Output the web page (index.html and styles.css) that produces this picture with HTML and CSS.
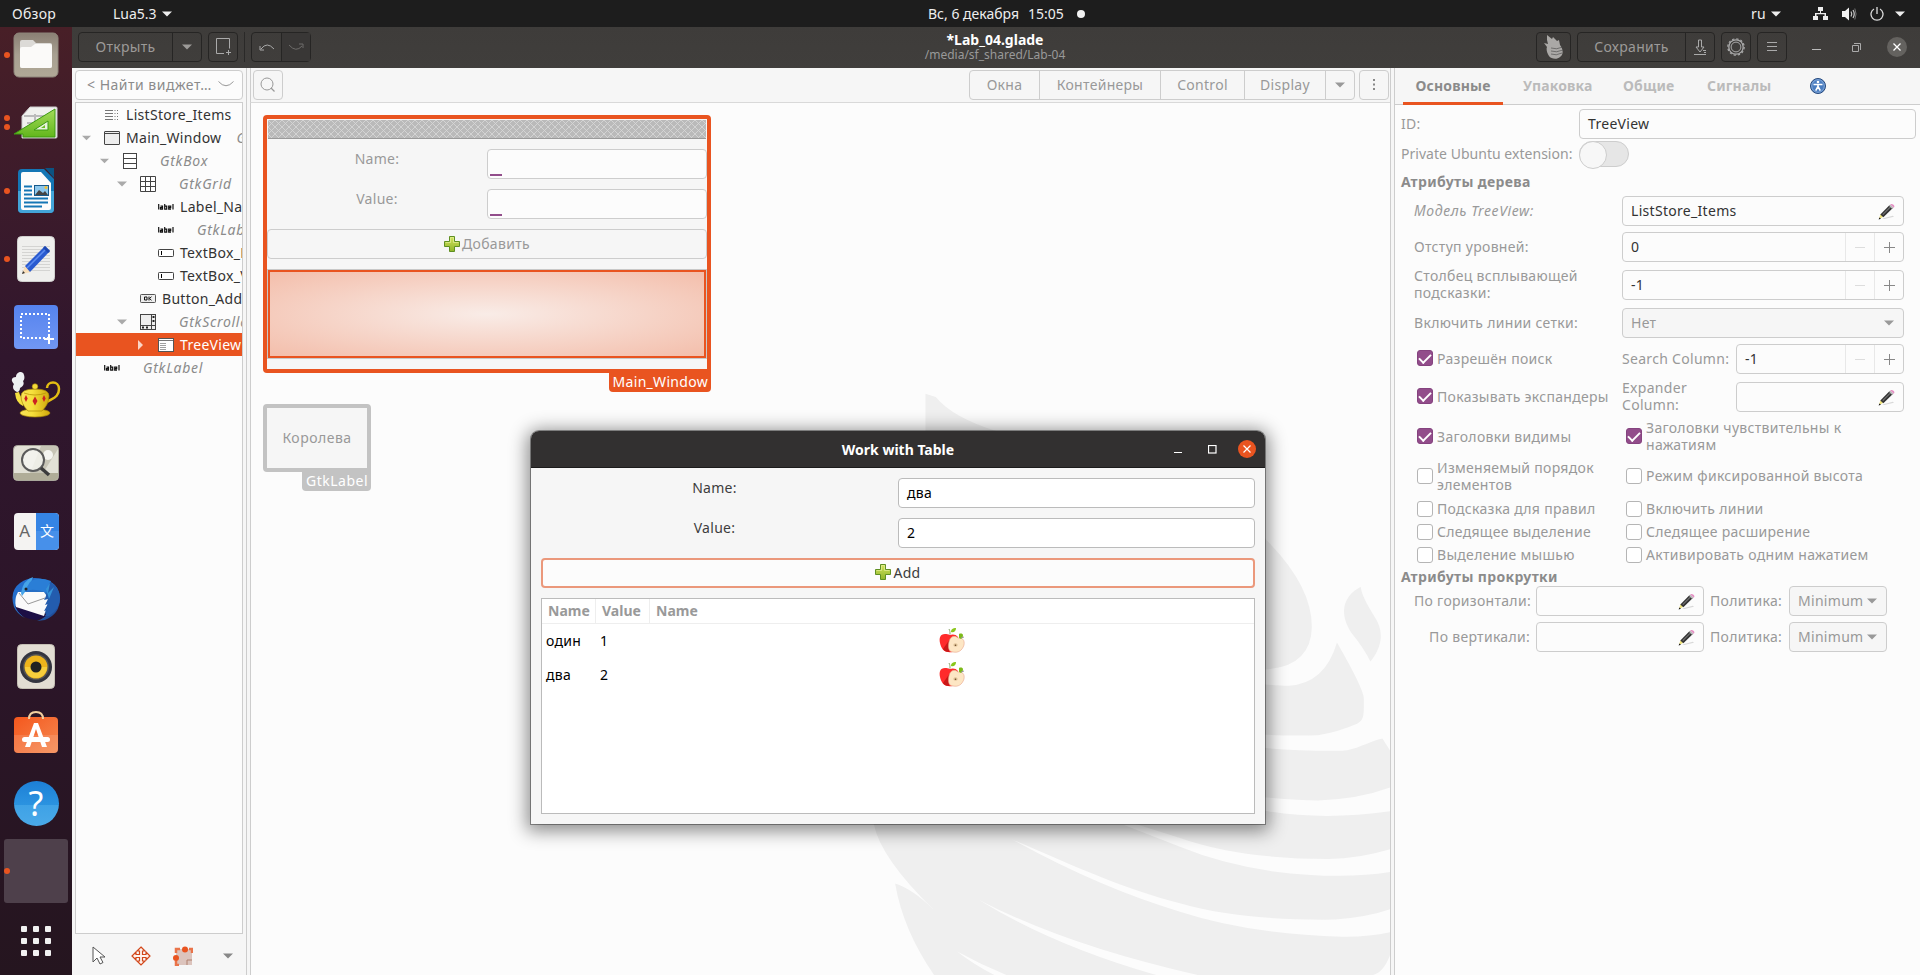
FILE: index.html
```html
<!DOCTYPE html>
<html lang="ru">
<head>
<meta charset="utf-8">
<title>Glade</title>
<link rel="stylesheet" href="styles.css">
</head>
<body>
<svg width="0" height="0" class="defs">
  <defs>
    <linearGradient id="gPlus" x1="0" y1="0" x2="0" y2="1"><stop offset="0" stop-color="#d4e45f"/><stop offset="1" stop-color="#8fb52a"/></linearGradient>
    <linearGradient id="gFolder" x1="0" y1="0" x2="0" y2="1"><stop offset="0" stop-color="#8a7f74"/><stop offset=".5" stop-color="#a8a092"/><stop offset="1" stop-color="#b0a896"/></linearGradient>
    <linearGradient id="gShot" x1="0" y1="0" x2="0" y2="1"><stop offset="0" stop-color="#5583ee"/><stop offset="1" stop-color="#7197f4"/></linearGradient>
    <linearGradient id="gGreen" x1="0" y1="0" x2="0" y2="1"><stop offset="0" stop-color="#a4dc5a"/><stop offset="1" stop-color="#62b61c"/></linearGradient>
    <linearGradient id="gBag" x1="0" y1="0" x2="1" y2="1"><stop offset="0" stop-color="#f4571d"/><stop offset="1" stop-color="#f58a52"/></linearGradient>
    <linearGradient id="gBird" x1="0" y1="0" x2="1" y2="1"><stop offset="0" stop-color="#1f6ed4"/><stop offset=".5" stop-color="#2a6fc0"/><stop offset="1" stop-color="#1b3f8a"/></linearGradient>
    <linearGradient id="gPot" x1="0" y1="0" x2="1" y2="0"><stop offset="0" stop-color="#f7e25a"/><stop offset=".4" stop-color="#f6e03c"/><stop offset="1" stop-color="#d0a80c"/></linearGradient>
    <symbol id="plus" viewBox="0 0 16 16"><path d="M5.500.5h5v5h5v5h-5v5h-5v-5h-5v-5h5z" fill="url(#gPlus)" stroke="#5f8f22"/><path d="M6.500 6.500v-5h3v5M1.500 6.500h5M9.500 6.500h5" fill="none" stroke="#e4ef98" stroke-opacity=".7"/></symbol>
    <symbol id="pencil" viewBox="0 0 16 16"><path d="M4 14.500l10-2.500 1 1-9 2z" fill="#d8d8d8"/><path d="M1 15l1.200-4.500L5 13z" fill="#eee27a"/><path d="M.6 15.600l.8-2 1.400 1.300z" fill="#111"/><path d="M2.200 10.800L11 1.900l3 2.800-9 8.700z" fill="#333"/><path d="M4.500 11L12 3.500" stroke="#777" fill="none"/><path d="M10.300 2.600l1.200-1.200 3.200 3-1.300 1.200z" fill="#bbb"/><path d="M11.600 1.300C13-.2 17 2.200 14.800 4.400z" fill="#e590c4"/></symbol>
    <symbol id="down" viewBox="0 0 10 6"><path d="M0 .5h10L5 5.500z" fill="currentColor"/></symbol>
    <symbol id="apple" viewBox="0 0 26 25">
      <path d="M6 6C1 6 0 10 1 15c1 5 4 9 8 9 4 1 8 0 9-4l1-11c-2-3-6-3-8-2-2-1-3-1-5-1z" fill="#ff2b2b"/>
      <path d="M4 21l7-10 1 9-2 4c-3 0-5-1-6-3z" fill="#c91818"/>
      <path d="M11 6.500C11 4 11 3 10 1" fill="none" stroke="#8aa56a"/><path d="M12 4c0-3 2-4 5-4 0 3-2 5-5 4z" fill="#8ac61a"/>
      <path d="M10 14c1-6 6-7 9-4 4-1 7 2 6 7-2 6-6 8-11 7-5 0-5-6-4-10z" fill="#fde6c4" stroke="#e9a58c" stroke-width=".6"/>
      <path d="M20 10V6c2-1 4 0 4 1 0 2-1 3-2 4z" fill="#7dba1a"/><path d="M22 10l3-1" stroke="#999"/>
      <ellipse cx="16.500" cy="17" rx="2.200" ry="1.800" fill="#e0c49a"/><circle cx="16.500" cy="17.300" r=".8" fill="#6b4a2a"/>
    </symbol>
    <symbol id="lbl" viewBox="0 0 16 8"><g fill="none" stroke="#111" stroke-width="1.200"><path d="M.7 1v5.500M2.500 3.200h2v3h-2v-1.500h2M6.700 1v5.200h2v-3h-2M10.700 4.700h2V3.200h-2v3h2.300M15 1v5.500"/></g></symbol>
    <symbol id="entryIcon" viewBox="0 0 16 8"><rect x=".5" y=".5" width="15" height="7" rx=".8" fill="#fff" stroke="#444"/><path d="M3.500 2v4" stroke="#000"/></symbol>
    <pattern id="mesh" width="7" height="7" patternUnits="userSpaceOnUse"><rect width="7" height="7" fill="#bababa"/><path d="M0 0l7 7M7 0L0 7" stroke="#d6d6d6" stroke-width=".9"/></pattern>
  </defs>
</svg>

<header class="topbar">
  <span class="tb-activities">Обзор</span>
  <span class="tb-app">Lua5.3</span><svg class="tb-arrow" width="10" height="6"><use href="#down"/></svg>
  <span class="tb-date">Вс, 6 декабря</span><span class="tb-time">15:05</span><i class="tb-dot"></i>
  <span class="tb-lang">ru</span><svg class="tb-arrow" width="10" height="6"><use href="#down"/></svg>
  <svg class="tb-net" width="15" height="14"><path d="M5 0h5v4H8v2h5v3h2v4h-5V9h1.500V7.200h-8V9H5v4H0V9h2V6h5V4H5z" fill="#eee"/></svg>
  <svg class="tb-vol" width="15" height="14"><path d="M0 4h3l4-3.500v13L3 10H0z" fill="#f2f2f2"/><path d="M9 4.500q1.500 2.500 0 5M11 3q2.500 4 0 8" fill="none" stroke="#ccc" stroke-width="1.200"/><path d="M12.800 1.500q2.500 5.500 0 11" fill="none" stroke="#777"/></svg>
  <svg class="tb-pow" width="14" height="14"><path d="M4 2a6 6 0 1 0 6 0M7 0v7" fill="none" stroke="#ddd" stroke-width="1.300"/></svg>
  <svg class="tb-arrow tb-last" width="10" height="6"><use href="#down"/></svg>
</header>

<div class="desktop">
<nav class="dock">
  <div class="dock-item"><i class="run"></i>
    <svg width="46" height="46" viewBox="0 0 46 46"><rect x="1" y="1" width="44" height="44" rx="5" fill="url(#gFolder)" stroke="#8d857a"/><path d="M7 10q0-2 2-2h11l3 3h14q2 0 2 2v21q0 2-2 2H9q-2 0-2-2z" fill="#dcdad7"/><path d="M7 17q0-2 2-2h9l4-3h15q2 0 2 2v20q0 2-2 2H9q-2 0-2-2z" fill="#fbfaf9"/></svg></div>
  <div class="dock-item"><i class="run two"></i><i class="run two b"></i>
    <svg width="46" height="34" viewBox="0 0 46 34"><path d="M9 10L17 1h26q1 0 1 1v29q0 1-1 1H9z" fill="#f0f1ee" stroke="#ccc"/><path d="M11 10h20M22 8v10M14 17h12" stroke="#bbb" stroke-width="2"/><path d="M1 28L42 3v28H10v-3z" fill="url(#gGreen)" stroke="#3c9a10"/><path d="M21 24l14-9v9z" fill="#e8f3dd" stroke="#3c9a10"/><path d="M28 22l4-3v3z" fill="#6cc024"/></svg></div>
  <div class="dock-item"><i class="run"></i>
    <svg width="38" height="46" viewBox="0 0 38 46"><path d="M1 5q0-4 4-4h22l10 10v30q0 4-4 4H5q-4 0-4-4z" fill="#1476b5"/><path d="M1 23h36v18q0 4-4 4H5q-4 0-4-4z" fill="#43a4d8"/><path d="M28 0h9v10z" fill="#0c5382"/><path d="M4 6q0-2 2-2h18l10 11v25q0 2-2 2H6q-2 0-2-2z" fill="#fcfcfc"/><path d="M7 18.500h8M7 22.500h8M7 26.500h8M7 30.500h24M7 34.500h24M7 38.500h18" stroke="#1476b5" stroke-width="2"/><rect x="17.500" y="17.500" width="14" height="10" fill="#8cc7ec" stroke="#17598a"/><path d="M18 27l4-5 4 3 2-2 3 4z" fill="#444"/><circle cx="29" cy="19.500" r="1.500" fill="#f5c030"/></svg></div>
  <div class="dock-item"><i class="run"></i>
    <svg width="38" height="46" viewBox="0 0 38 46"><rect x=".5" y=".5" width="37" height="45" rx="4" fill="#efefed" stroke="#d0d0ce"/><path d="M5 10.500h28M5 13.500h28M5 16.500h28M5 19.500h28M5 22.500h28M5 25.500h28M5 28.500h28M5 31.500h28M5 34.500h28" stroke="#d4d4d2"/><path d="M5 38l3-8 6 6z" fill="#f8ddb8"/><path d="M5 38l1-3 2 2z" fill="#333"/><path d="M8 30l20-20 5 5-20 21z" fill="#2a5bd0"/><path d="M10 32l20-20" stroke="#5d8cf0" stroke-width="1.500"/><path d="M26 12l2-2 5 5-2 2z" fill="#1d47b0"/></svg></div>
  <div class="dock-item">
    <svg width="46" height="46" viewBox="0 0 46 46"><rect x="1" y="1" width="44" height="44" rx="4" fill="url(#gShot)"/><rect x="8" y="10" width="28" height="24" fill="none" stroke="#fff" stroke-width="2" stroke-dasharray="2 2"/><path d="M36 30v10M31 35h10" stroke="#fff" stroke-width="2"/></svg></div>
  <div class="dock-item">
    <svg width="50" height="48" viewBox="0 0 50 48"><path d="M6 21c-4-2-5-5-3-8C-1 9 1 6 5 6 5 1 12-1 13 4c1 3 0 5-1 6 2 4-1 6-3 7 0 2-1 4-3 4z" fill="#eef0f2"/><path d="M36 17c0-7 12-8 12 1 0 8-6 9-12 13" fill="none" stroke="#e3bd12" stroke-width="2.500"/><path d="M4 22l4-1q1 5 4 6l0 8Q5 32 4 22z" fill="#f5e040"/><ellipse cx="24" cy="42" rx="15" ry="4" fill="url(#gPot)" stroke="#a98806" stroke-width=".7"/><path d="M10 25q0-7 14-7t14 7q0 8-7 15H17q-7-7-7-15z" fill="url(#gPot)" stroke="#a98806" stroke-width=".7"/><path d="M13 22q11 4 22 0" fill="none" stroke="#b99408" stroke-width=".8"/><circle cx="24" cy="15.500" r="2.800" fill="#f3d93a" stroke="#a98806" stroke-width=".6"/><path d="M15 24l1.700 3.500L15 31l-1.700-3.500zM24 25.500l2.500 4.500-2.500 4.500-2.500-4.500zM33 24l1.700 3.500L33 31l-1.700-3.500z" fill="#cc2222"/></svg></div>
  <div class="dock-item">
    <svg width="46" height="36" viewBox="0 0 46 36"><rect x=".5" y=".5" width="45" height="35" rx="4" fill="#e2e1d6" stroke="#a9a79b"/><path d="M28 1h14q3 0 3 3L30 28H17z" fill="#c7c5b6"/><path d="M1 28h44v4q0 3-3 3H4q-3 0-3-3z" fill="#b0ad98"/><circle cx="35" cy="10" r="5" fill="#f4f4f0"/><circle cx="20" cy="15" r="11" fill="#f6f6f3" fill-opacity=".8" stroke="#5b5b5b" stroke-width="2"/><path d="M28 23l8 7" stroke="#3c3c3c" stroke-width="3.500"/></svg></div>
  <div class="dock-item"><div class="translate"><span>A</span><span>文</span></div></div>
  <div class="dock-item">
    <svg width="48" height="44" viewBox="0 0 48 44"><path d="M2 30Q-3 14 8 6 18-1 30 2q17 3 18 19 0 16-15 22l-8 1q8-3 10-7L4 30q3 7 9 11Q5 37 2 30z" fill="url(#gBird)"/><path d="M3 29l32 9-3 2-7 3Q8 42 3 29z" fill="#1c0f45"/><path d="M6 15l26 0 5 7-5 17L4 30Q2 22 6 15z" fill="#fafafa"/><path d="M7 16l9 11 17-6" fill="none" stroke="#999"/><path d="M9 16Q11 3 21 0q-3 9-11 19z" fill="#46a4e8"/><path d="M12 15q8-5 23 1l4-12Q26-1 18 5z" fill="#2a7ed6"/><path d="M35 15q-1 5-3 8l4-1-3 6 3-1-4 7 4-1-3 6h4q11-7 11-18Q47 9 38 5z" fill="#235cae"/><path d="M34 12l4-6-2 10 6-6-5 12" fill="#3593d8"/><circle cx="14" cy="12" r="1.500" fill="#222"/></svg></div>
  <div class="dock-item">
    <svg width="38" height="46" viewBox="0 0 38 46"><rect x=".5" y=".5" width="37" height="44" rx="4" fill="#e2ddd3" stroke="#c4bfb4"/><circle cx="19" cy="23" r="16" fill="#33343f"/><circle cx="19" cy="23" r="13" fill="#555"/><circle cx="19" cy="23" r="11.500" fill="#eeb41c"/><path d="M8 23a11 11 0 0 0 22 0z" fill="#f7ce3c"/><circle cx="19" cy="23" r="5.500" fill="#222"/></svg></div>
  <div class="dock-item bag">
    <svg width="46" height="44" viewBox="0 0 46 44"><rect x="1" y="7" width="44" height="36" rx="4" fill="url(#gBag)"/><path d="M1 25h44v14q0 4-4 4H5q-4 0-4-4z" fill="#fff" fill-opacity=".12"/><path d="M16 9q0-7 7-7t7 7" fill="none" stroke="#f2cf9f" stroke-width="2"/><path d="M21 13h4l9 24h-5L23 19l-6 18h-5z" fill="#fff"/><rect x="9" y="27" width="28" height="5" rx="2.500" fill="#fff"/></svg></div>
  <div class="dock-item"><div class="help">?</div></div>
  <div class="dock-item blank"><i class="run"></i></div>
  <div class="dock-item apps">
    <svg width="30" height="30" fill="#f1f1f1"><g id="r3"><rect width="6" height="6" rx="1"/><rect x="12" width="6" height="6" rx="1"/><rect x="24" width="6" height="6" rx="1"/></g><use href="#r3" y="12"/><use href="#r3" y="24"/></svg></div>
</nav>

<main class="app">
  <div class="hbar">
    <div class="hgroup"><span class="hb open">Открыть</span><span class="hb hdrop"><svg width="10" height="6"><use href="#down"/></svg></span></div>
    <span class="hb solo newf"><svg width="18" height="18"><path d="M10 15.500H2.500v-15h13v10M14.500 12v5M12 14.500h5" fill="none" stroke="#aaa"/></svg></span>
    <i class="hsep"></i>
    <div class="hgroup undo"><span class="hb"><svg width="16" height="8"><path d="M2 6Q8-2 15 6M1 3v4h4" fill="none" stroke="#aaa"/></svg></span><span class="hb off"><svg width="16" height="8"><path d="M1 2Q8 10 14 3M11 1h4v4" fill="none" stroke="#6e6c6a"/></svg></span></div>
    <div class="htitle"><b>*Lab_04.glade</b><small>/media/sf_shared/Lab-04</small></div>
    <span class="hb solo glade"><svg width="20" height="24"><path d="M3 0l5 4 1-2 4 4 2-1 1 5c4 5 3 10 0 12-3 3-9 2-11-1C3 18 2 14 3 12L0 8l4 1-1-4z" fill="#aaa8a6"/><path d="M7 13q5 2 12-1M7 16q5 2 12-1M7 19q5 2 11-1" fill="none" stroke="#444" stroke-width=".6"/></svg></span>
    <div class="hgroup save"><span class="hb sv">Сохранить</span><span class="hb"><svg width="13" height="16"><path d="M4.500 1h3v7h2.500l-4 5-4-5h2.500zM0 15.500h12M9 11.500h3M10 13.500h2" fill="none" stroke="#aaa"/></svg></span></div>
    <span class="hb solo gear"><svg width="18" height="18"><circle cx="9" cy="9" r="7.200" fill="none" stroke="#aaa" stroke-width="1.300"/><circle cx="9" cy="9" r="8.200" fill="none" stroke="#aaa" stroke-width="1.200" stroke-dasharray="2.300 2"/><circle cx="9" cy="9" r="4.900" fill="none" stroke="#aaa"/></svg></span>
    <span class="hb solo menu"><svg width="10" height="10"><path d="M0 .5h10M0 4.500h10M0 8.500h10" stroke="#aaa"/></svg></span>
    <svg class="wmin" width="9" height="10"><path d="M0 7.500h9" stroke="#bbb"/></svg>
    <svg class="wres" width="9" height="9"><path d="M.5 2.500h6v6h-6zM2 .5h6.500V7" fill="none" stroke="#aaa"/></svg>
    <span class="wclose"><svg width="8" height="8"><path d="M.5.5l7 7M7.500.5l-7 7" stroke="#fff" stroke-width="1.300"/></svg></span>
  </div>

  <div class="body">
  <aside class="left">
    <div class="find"><span>&lt; Найти виджет…</span><svg width="16" height="6"><path d="M.5.5Q8 9 15.500.5" fill="none" stroke="#999"/></svg></div>
    <div class="tree">
      <div class="tr"><svg class="p29" width="13" height="10"><path d="M0 .5h8M0 3.500h8M0 6.500h8M0 9.500h8M9.500 .5h1M12 .5h1M9.500 3.500h1M12 3.500h1M9.500 6.500h1M12 6.500h1M9.500 9.500h1M12 9.500h1" stroke="#777"/></svg><span class="g8">ListStore_Items</span></div>
      <div class="tr"><svg class="ar p6" width="9" height="6"><use href="#down"/></svg><svg class="g13" width="16" height="14"><rect x=".5" y=".5" width="15" height="13" rx=".5" fill="#eee" stroke="#444"/><path d="M1 2.500h14" stroke="#444"/></svg><span class="g6">Main_Window</span><em class="ty g15">GtkWindow</em></div>
      <div class="tr"><svg class="ar p24" width="9" height="6"><use href="#down"/></svg><svg class="g14" width="14" height="16"><rect x=".5" y=".5" width="13" height="15" fill="#fff" stroke="#444"/><path d="M1 5.500h12M1 10.500h12" stroke="#444"/></svg><em class="g23">GtkBox</em></div>
      <div class="tr"><svg class="ar p41" width="10" height="6"><use href="#down"/></svg><svg class="g13" width="16" height="16"><path d="M.5.5h15v15H.5zM5.500 0v16M10.500 0v16M0 5.500h16M0 10.500h16" fill="#fff" stroke="#444"/></svg><em class="g23">GtkGrid</em></div>
      <div class="tr"><svg class="p82" width="16" height="8"><use href="#lbl"/></svg><span class="g6">Label_Name</span></div>
      <div class="tr"><svg class="p82" width="16" height="8"><use href="#lbl"/></svg><em class="g23">GtkLabel</em></div>
      <div class="tr"><svg class="p82" width="16" height="8"><use href="#entryIcon"/></svg><span class="g6">TextBox_Name</span></div>
      <div class="tr"><svg class="p82" width="16" height="8"><use href="#entryIcon"/></svg><span class="g6">TextBox_Value</span></div>
      <div class="tr"><svg class="p64" width="16" height="9"><rect x=".5" y=".5" width="15" height="8" rx=".8" fill="#eee" stroke="#555"/><path d="M4.500 3h2.500v3H4.500zM9 2.500v4M11.500 2.700l-2 1.800 2 1.800" fill="none" stroke="#111"/></svg><span class="g6">Button_Add</span></div>
      <div class="tr"><svg class="ar p41" width="10" height="6"><use href="#down"/></svg><svg class="g13" width="16" height="16"><rect x=".5" y=".5" width="15" height="15" fill="#eee" stroke="#444"/><path d="M0 11.500h16M11.500 0v16" stroke="#444"/><path d="M2 13.500h8M13.500 2v8" stroke="#222" stroke-width="2" stroke-dasharray="2 2"/></svg><em class="g23">GtkScrolledWindow</em></div>
      <div class="tr sel"><svg class="p62" width="5" height="10"><path d="M0 0v10l5-5z" fill="#fbd5c6"/></svg><svg class="g15" width="16" height="14"><rect x=".5" y=".5" width="15" height="13" fill="#fff" stroke="#555"/><path d="M1 2.500h14" stroke="#777"/><path d="M2 5.500h6M2 7.500h6M2 9.500h6M2 11.500h6" stroke="#888" stroke-width=".8"/></svg><span class="g6">TreeView</span></div>
      <div class="tr"><svg class="p28" width="16" height="8"><use href="#lbl"/></svg><em class="g23">GtkLabel</em></div>
    </div>
    <div class="tools">
      <svg class="t1" width="16" height="19"><path d="M1 1v15l4-4 3 6 3-1.500-3-5.500h5z" fill="#fff" stroke="#555"/></svg>
      <svg class="t2" width="20" height="20"><path d="M10 1l4 4h-2.500v3.500H15V6l4 4-4 4v-2.500h-3.500V15H14l-4 4-4-4h2.500v-3.500H5V14l-4-4 4-4v2.500h3.500V5H6z" fill="#fff4ef" stroke="#d2471a" stroke-width="1.200"/></svg>
      <svg class="t3" width="20" height="20"><rect x="3" y="3" width="16" height="16" fill="#dcc4bd"/><path d="M3 7V3h4M19 7V3h-3M3 15v4h3" fill="none" stroke="#e9744a" stroke-width="2.500"/><path d="M14 19v-5h5" fill="none" stroke="#b0806f"/><circle cx="12" cy="3.500" r="3" fill="#e95420"/><circle cx="3" cy="12" r="3" fill="#e95420"/></svg>
      <svg class="t4" width="10" height="6"><use href="#down"/></svg>
    </div>
  </aside>

  <section class="center">
    <div class="cbar">
      <span class="cfind"><svg width="16" height="16"><circle cx="7" cy="7" r="6" fill="none" stroke="#999"/><path d="M11 11l3.500 3.500" stroke="#999" stroke-width="1.300"/></svg></span>
      <div class="cgroup"><span class="w1">Окна</span><span class="w2">Контейнеры</span><span class="w3">Control</span><span class="w4">Display</span><span class="w5"><svg width="10" height="6"><use href="#down"/></svg></span></div>
      <span class="cmore"><svg width="2" height="11"><path d="M1 0v2M1 4.500v2M1 9v2" stroke="#888" stroke-width="2"/></svg></span>
    </div>
    <div class="canvas">
      <svg class="wm" width="540" height="595" viewBox="0 0 1568 1568" preserveAspectRatio="none" fill="#efefef">
        <path d="M190 36L220 45Q270 100 400 136L700 240 1176 418Q1312 540 1312 650 1310 755 1176 763L700 763 190 300z"/>
        <path d="M1454 545C1400 570 1390 620 1430 670Q1462 705 1482 742C1520 700 1520 660 1495 625Q1456 570 1454 545z"/>
        <path d="M1385 692Q1350 800 1245 806 1200 805 1100 795V930Q1230 940 1330 936 1390 927 1445 905C1465 895 1463 880 1463 840Q1463 815 1385 692z"/>
        <path d="M1517 945L1545 985V1072Q1450 1105 1330 1108 1250 1108 1100 1092V960Q1200 978 1400 977C1440 976 1470 955 1517 945z"/>
        <path d="M1545 1136V1235Q1450 1262 1360 1262 1100 1262 929 1207L800 1170 1100 1120Q1300 1168 1545 1136z"/>
        <path d="M40 1170Q60 1260 212 1394L350 1372Q600 1490 980 1568H1490Q1525 1560 1545 1500V1454Q1480 1468 1400 1467 1130 1460 929 1401 700 1340 440 1210C620 1280 760 1340 929 1379Q1100 1425 1380 1422 1480 1415 1545 1393V1296Q1400 1318 1200 1295 1050 1275 929 1230L765 1172z"/>
        <path d="M102 1327Q125 1450 215 1568H390Q330 1540 282 1506 350 1540 425 1568H860Q560 1490 350 1372L350 1330 212 1330V1394Q150 1340 102 1327z"/>
      </svg>
      <div class="win">
        <svg class="mesh" width="438" height="19"><rect width="438" height="19" fill="url(#mesh)"/></svg>
        <div class="wrow"><span>Name:</span><i></i></div>
        <div class="wrow"><span>Value:</span><i></i></div>
        <div class="wbtn"><svg width="16" height="16"><use href="#plus"/></svg>Добавить</div>
        <div class="wtree"></div>
        <span class="tag">Main_Window</span>
      </div>
      <div class="win lab">Королева<span class="tag">GtkLabel</span></div>
    </div>
  </section>

  <aside class="right">
    <div class="tabs"><b class="on">Основные</b><b class="u2">Упаковка</b><b class="u3">Общие</b><b class="u4">Сигналы</b>
      <svg width="16" height="16" viewBox="0 0 16 16"><circle cx="8" cy="8" r="7.500" fill="#4a7dc0" stroke="#26497d"/><circle cx="8" cy="8" r="6.300" fill="none" stroke="#9dbde6" stroke-width=".7"/><circle cx="8" cy="4" r="1.300" fill="#fff"/><path d="M3.500 6.500h9M8 6v3M8 8.500l-2.300 4.200M8 8.500l2.300 4.200" stroke="#fff" stroke-width="1.600" fill="none"/></svg></div>
    <div class="idrow"><span>ID:</span><div class="en">TreeView</div></div>
    <div class="swrow"><span>Private Ubuntu extension:</span><i class="sw"></i></div>
    <b class="sect">Атрибуты дерева</b>
    <div class="prop"><em>Модель TreeView:</em><div class="en">ListStore_Items<svg class="pen" width="17" height="17"><use href="#pencil"/></svg></div></div>
    <div class="prop"><span>Отступ уровней:</span><div class="en spin">0<i class="mi"></i><i class="pl"></i></div></div>
    <div class="prop p38"><span>Столбец всплывающей<br>подсказки:</span><div class="en spin">-1<i class="mi"></i><i class="pl"></i></div></div>
    <div class="prop p38"><span>Включить линии сетки:</span><div class="en combo">Нет<svg width="10" height="6"><use href="#down"/></svg></div></div>
    <div class="half ha"><label><i class="ck on"></i>Разрешён поиск</label><div class="sub"><span>Search Column:</span><div class="en spin">-1<i class="mi"></i><i class="pl"></i></div></div></div>
    <div class="half hb2"><label><i class="ck on"></i>Показывать экспандеры</label><div class="sub"><span>Expander<br>Column:</span><div class="en"><svg class="pen" width="17" height="17"><use href="#pencil"/></svg></div></div></div>
    <div class="half hc"><label><i class="ck on"></i>Заголовки видимы</label><label><i class="ck on"></i><span>Заголовки чувствительны к<br>нажатиям</span></label></div>
    <div class="half hd"><label><i class="ck"></i><span>Изменяемый порядок<br>элементов</span></label><label><i class="ck"></i>Режим фиксированной высота</label></div>
    <div class="half"><label><i class="ck"></i>Подсказка для правил</label><label><i class="ck"></i>Включить линии</label></div>
    <div class="half"><label><i class="ck"></i>Следящее выделение</label><label><i class="ck"></i>Следящее расширение</label></div>
    <div class="half"><label><i class="ck"></i>Выделение мышью</label><label><i class="ck"></i>Активировать одним нажатием</label></div>
    <b class="sect s2">Атрибуты прокрутки</b>
    <div class="adj"><span>По горизонтали:</span><div class="en"><svg class="pen" width="17" height="17"><use href="#pencil"/></svg></div><span class="pol">Политика:</span><div class="en combo">Minimum<svg width="10" height="6"><use href="#down"/></svg></div></div>
    <div class="adj"><span>По вертикали:</span><div class="en"><svg class="pen" width="17" height="17"><use href="#pencil"/></svg></div><span class="pol">Политика:</span><div class="en combo">Minimum<svg width="10" height="6"><use href="#down"/></svg></div></div>
  </aside>
  </div>
</main>
</div>

<div class="dialog">
  <div class="dtitle"><b>Work with Table</b>
    <span class="dctl"><svg width="8" height="9"><path d="M0 7.500h8" stroke="#fff"/></svg><svg width="9" height="9"><rect x=".5" y=".5" width="7.500" height="7.500" fill="none" stroke="#fff" stroke-width="1.200"/></svg><i class="dclose"><svg width="8" height="8"><path d="M.5.5l7 7M7.500.5l-7 7" stroke="#fff" stroke-width="1.200"/></svg></i></span></div>
  <div class="drow"><span>Name:</span><div>два</div></div>
  <div class="drow"><span>Value:</span><div>2</div></div>
  <div class="dadd"><svg width="16" height="16"><use href="#plus"/></svg>Add</div>
  <div class="dtable">
    <div class="dh"><b>Name</b><b>Value</b><b>Name</b></div>
    <div class="dr"><span>один</span><span>1</span><svg width="26" height="25"><use href="#apple"/></svg></div>
    <div class="dr"><span>два</span><span>2</span><svg width="26" height="25"><use href="#apple"/></svg></div>
  </div>
</div>
</body>
</html>
```
FILE: styles.css
```css
* { box-sizing: border-box; }
body { margin: 0; width: 1920px; height: 975px; overflow: hidden; background: #fcfcfc; font: 14px/17px "Noto Sans", "Open Sans", sans-serif; letter-spacing: .3px; color: #999; white-space: nowrap; }
svg { flex: none; display: block; }
em { letter-spacing: .7px; }
.defs { position: absolute; }

/* System bar */
.topbar { height: 27px; background: #1d1d1d; color: #eee; display: flex; align-items: center; }
.tb-activities { width: 113px; padding-left: 12px; }
.tb-app { width: 49px; letter-spacing: 0; }
.tb-date { margin-left: 756px; width: 100px; letter-spacing: 0; }
.tb-time { width: 49px; letter-spacing: 0; }
.tb-dot { width: 8px; height: 8px; border-radius: 50%; background: #f2f2f2; }
.tb-lang { margin-left: 666px; width: 20px; }
.tb-net { margin-left: 32px; }
.tb-vol { margin-left: 14px; }
.tb-pow { margin-left: 13px; }
.tb-last { margin-left: 11px; }

.desktop { display: flex; height: 948px; }

/* Dock */
.dock { width: 72px; flex: none; display: flex; flex-direction: column; gap: 12px; background: linear-gradient(#481f27 0, #3c1b2b 170px, #30162d 330px, #2c1529 600px, #25151f 948px); }
.dock-item { height: 56px; display: flex; align-items: center; justify-content: center; position: relative; flex: none; }
.run { position: absolute; left: 4px; top: 25px; width: 6px; height: 6px; border-radius: 50%; background: #e95420; }
.run.two { top: 20px; }
.run.two.b { top: 29px; }
.bag { padding-bottom: 6px; }
.blank { height: 64px; margin: -4px 4px; border-radius: 3px; background: #4e404b; }
.blank .run { left: 0; top: 29px; }
.apps { height: 60px; }
.translate { width: 45px; height: 37px; border-radius: 4px; overflow: hidden; display: flex; font: 17px/36px "Noto Sans", "Noto Sans CJK SC", sans-serif; color: #666; background: #f4f3f2; text-align: center; }
.translate span { flex: 1; }
.translate span + span { background: linear-gradient(#3584e4 50%, #4790ea 50%); color: #fff; font-size: 14px; }
.help { width: 45px; height: 45px; border-radius: 50%; background: linear-gradient(#1d7fd6 0, #2b93e0 53%, #3fa2e6 54%, #4aa9e8); color: #fff; font-size: 34px; line-height: 45px; text-align: center; }

/* Application header */
.app { width: 1848px; display: flex; flex-direction: column; }
.hbar { height: 41px; flex: none; background: linear-gradient(#3e3c3a, #403e3c); display: flex; align-items: center; padding: 0 0 1px 6px; color: #9c9a98; }
.hgroup { height: 30px; border: 1px solid #262524; border-radius: 4px; display: flex; }
.hb { display: flex; align-items: center; justify-content: center; }
.hgroup .hb + .hb { border-left: 1px solid #262524; }
.hgroup .hb { width: 29px; }
.hgroup .open { width: 93px; padding-bottom: 1px; }
.hgroup .sv { width: 107px; padding-bottom: 1px; }
.solo { height: 30px; width: 30px; border: 1px solid #262524; border-radius: 4px; }
.newf { margin-left: 6px; }
.hsep { width: 1px; height: 30px; background: #2a2928; margin: 0 6px; }
.off { background: #393736; }
.htitle { width: 200px; margin-left: 584px; display: flex; flex-direction: column; align-items: center; line-height: 15px; color: #fff; letter-spacing: 0; }
.htitle small { font-size: 12px; color: #999; line-height: 16px; }
.glade { width: 35px; margin-left: 441px; }
.save { margin-left: 6px; }
.gear, .menu { margin-left: 6px; }
.wmin { margin-left: 25px; }
.wres { margin-left: 31px; }
.wclose { width: 20px; height: 20px; margin-left: 26px; border-radius: 50%; background: #64625f; display: flex; align-items: center; justify-content: center; }

.body { display: flex; height: 907px; }

/* Widget tree */
.left { width: 175px; flex: none; background: #f6f6f6; border-right: 1px solid #cdcdcd; padding: 2px 3px 0; display: flex; flex-direction: column; }
.find { width: 168px; height: 30px; flex: none; border: 1px solid #cdcdcd; border-radius: 4px; background: #fcfcfc; display: flex; align-items: center; justify-content: space-between; padding: 0 8px 2px 11px; color: #8b8b8b; }
.find span { letter-spacing: .5px; }
.tree { width: 168px; height: 832px; flex: none; margin-top: 2px; border: 1px solid #cdcdcd; background: #fcfcfc; overflow: hidden; color: #333; }
.tr { height: 23px; display: flex; align-items: center; }
.tr em { color: #8b8b8b; }
.tr svg { color: #aaa; }
.sel { background: #e95420; color: #fff; }
.p6 { margin-left: 6px; } .p24 { margin-left: 24px; } .p28 { margin-left: 28px; } .p29 { margin-left: 29px; }
.p41 { margin-left: 41px; } .p62 { margin-left: 62px; } .p64 { margin-left: 64px; } .p82 { margin-left: 82px; }
.g6 { margin-left: 6px; } .g8 { margin-left: 8px; } .g13 { margin-left: 13px; } .g14 { margin-left: 14px; } .g15 { margin-left: 15px; } .g23 { margin-left: 23px; }
.tools { height: 41px; padding-top: 2px; display: flex; align-items: center; color: #888; }
.t1 { margin-left: 17px; } .t2 { margin-left: 23px; } .t3 { margin-left: 22px; } .t4 { margin-left: 30px; }

/* Design area */
.center { width: 1144px; flex: none; display: flex; flex-direction: column; border-left: 3px solid #f6f6f6; border-right: 1px solid #cdcdcd; }
.cbar { height: 35px; flex: none; background: #f6f6f6; border-left: 1px solid #cdcdcd; border-bottom: 1px solid #d9d9d9; display: flex; align-items: center; padding-left: 1px; }
.cfind, .cmore, .cgroup { height: 30px; border: 1px solid #cdcdcd; border-radius: 4px; display: flex; align-items: center; justify-content: center; margin-top: -1px; }
.cfind { width: 30px; margin-left: 1px; }
.cmore { width: 30px; margin-left: 4px; }
.cgroup { margin-left: 686px; }
.cgroup span { height: 28px; display: flex; align-items: center; justify-content: center; }
.cgroup span + span { border-left: 1px solid #cdcdcd; }
.w1 { width: 69px; } .w2 { width: 121px; } .w3 { width: 84px; } .w4 { width: 81px; } .w5 { width: 29px; }
.canvas { flex: 1; position: relative; border-left: 1px solid #cdcdcd; background: #fcfcfc; padding: 12px; overflow: hidden; }
.wm { position: absolute; left: 609px; top: 277px; }
.win { position: relative; width: 448px; height: 258px; border: 4px solid #e95420; border-radius: 4px; background: #f6f6f6; padding-top: 1px; }
.mesh { margin-left: 1px; height: 19px; border-bottom: 1px solid #9a9a9a; }
.wrow { height: 30px; margin-top: 10px; display: grid; grid-template-columns: 220px 220px; text-align: center; }
.wrow span { padding-top: 1px; }
.wrow i { background: #fcfcfc; border: 1px solid #cdcdcd; border-radius: 4px; display: flex; align-items: flex-end; padding: 0 0 2px 2px; }
.wrow i::after { content: ""; width: 12px; height: 2px; background: #924d8b; }
.wbtn { margin-top: 10px; height: 30px; border: 1px solid #cdcdcd; border-radius: 4px; display: flex; align-items: center; justify-content: center; gap: 2px; padding-bottom: 1px; }
.wtree { margin: 11px 1px 0; height: 88px; border: 2px solid #e95420; outline: 1px solid #c8c8c8; background: radial-gradient(ellipse 75% 75% at center, #f9ece7, #f3bba7); }
.tag { position: absolute; right: -4px; top: 100%; height: 23px; padding: 4px 3px 0 4px; line-height: 18px; color: #fff; background: #e95420; border-radius: 0 0 4px 4px; }
.lab { width: 108px; height: 68px; margin-top: 31px; padding: 0 0 1px; border-color: #c3c3c3; display: flex; align-items: center; justify-content: center; letter-spacing: .5px; }
.lab .tag { background: #c3c3c3; }

/* Properties */
.right { width: 529px; flex: none; border-left: 3px solid #f6f6f6; box-shadow: inset 1px 0 #cdcdcd; background: #fcfcfc; padding-left: 1px; }
.tabs { height: 37px; background: #f6f6f6; border-bottom: 1px solid #cdcdcd; display: flex; align-items: center; color: #bbb; letter-spacing: .15px; }
.tabs b { height: 37px; line-height: 36px; }
.tabs .on { margin-left: 8px; width: 100px; text-align: center; border-bottom: 3px solid #e95420; color: #8b8b8b; }
.u2 { margin-left: 20px; width: 100px; } .u3 { width: 84px; } .u4 { width: 103px; }
.idrow { margin-top: 4px; height: 30px; display: grid; grid-template-columns: 178px 337px; padding-left: 6px; align-items: center; }
.idrow > span, .swrow > span, .prop > span, .prop > em, .sub > span, .adj > span, .half label { padding-bottom: 2px; }
.en { height: 30px; border: 1px solid #cdcdcd; border-radius: 4px; background: #fcfcfc; color: #333; display: flex; align-items: center; padding: 0 0 2px 8px; }
.en svg { margin-bottom: -2px; }
.en .pen { margin: 0 8px -2px auto; }
.swrow { margin-top: 2px; height: 26px; display: grid; grid-template-columns: 178px 50px; padding-left: 6px; align-items: center; letter-spacing: .03px; }
.sw { height: 26px; border: 1px solid #cdcdcd; border-radius: 13px; background: #e6e6e6; }
.sw::after { content: ""; display: block; width: 26px; height: 26px; margin: -1px; border: 1px solid #cdcdcd; border-radius: 50%; background: #f7f7f7; }
.sect { display: block; margin: 6px 0 6px 6px; color: #8b8b8b; line-height: 17px; letter-spacing: .35px; }
.prop { display: grid; grid-template: 30px / 208px 282px; padding-left: 19px; height: 30px; margin-bottom: 6px; align-items: center; }
.p38 { margin: 8px 0; }
.prop em { letter-spacing: .6px; }
.spin i { width: 29px; height: 28px; margin-bottom: -2px; border-left: 1px solid #e8e8e8; display: flex; align-items: center; justify-content: center; position: relative; }
.spin .mi { margin-left: auto; }
.mi::before, .pl::before { content: ""; width: 10px; height: 1px; background: #ddd; }
.pl::before { width: 11px; background: #888; }
.pl::after { content: ""; position: absolute; left: 14px; top: 9px; width: 1px; height: 11px; background: #888; }
.combo { background: #f6f6f6; color: #999; justify-content: space-between; padding-right: 9px; }
.half { display: grid; grid-template-columns: 208px 282px; padding-left: 19px; height: 23px; align-items: center; }
.half label { display: flex; align-items: center; gap: 4px; padding-left: 3px; }
.half label + label { padding-left: 4px; }
.ha { height: 32px; margin-top: -3px; } .hb2 { height: 44px; } .hc { height: 36px; } .hd { height: 43px; }
.ck { width: 16px; height: 16px; border: 1px solid #b5b5b5; border-radius: 3px; background: #fff; flex: none; display: flex; justify-content: center; }
.ck.on { background: #924d8b; border-color: #85437f; }
.ck.on::after { content: ""; width: 10px; height: 5px; border: solid #fff; border-width: 0 0 2px 2px; transform: rotate(-45deg) translate(-2px, 2px); }
.sub { display: grid; grid-template-columns: 114px 168px; align-items: center; }
.s2 { margin: 1px 0 0 6px; line-height: 18px; }
.adj { display: grid; grid-template-columns: 116px 168px 73px 98px; column-gap: 6px; height: 30px; margin: 0 0 6px 19px; align-items: center; }
.adj > span:first-child { text-align: right; }

/* Dialog floating over the designer */
.dialog { position: absolute; left: 531px; top: 431px; width: 734px; height: 393px; border-radius: 8px 8px 0 0; background: #f6f6f6; box-shadow: 0 0 0 1px rgba(0,0,0,.35), 0 3px 18px 4px rgba(0,0,0,.45); color: #3d3d3d; padding: 0 10px; }
.dtitle { height: 37px; margin: 0 -10px; background: #323030; border-bottom: 1px solid #1c1b1b; border-radius: 8px 8px 0 0; color: #fff; display: flex; align-items: center; justify-content: center; position: relative; letter-spacing: 0; }
.dctl { position: absolute; right: 9px; top: 9px; display: flex; align-items: center; height: 18px; gap: 21px; }
.dctl svg + svg { margin-left: 5px; }
.dclose { width: 18px; height: 18px; border-radius: 50%; background: #e95420; display: flex; align-items: center; justify-content: center; }
.drow { display: grid; grid-template-columns: 347px 357px; column-gap: 10px; height: 30px; margin-top: 10px; text-align: center; }
.drow span { padding-top: 1px; }
.drow div { border: 1px solid #bbb; border-radius: 4px; background: #fff; color: #000; text-align: left; line-height: 28px; padding-left: 8px; }
.dadd { margin-top: 10px; height: 30px; border: 2px solid #eb987b; border-radius: 4px; background: #fcfcfc; display: flex; align-items: center; justify-content: center; gap: 2px; padding-bottom: 2px; }
.dtable { margin-top: 10px; height: 216px; border: 1px solid #bbb; background: #fff; color: #000; }
.dh { display: grid; grid-template-columns: 54px 54px 1fr; height: 25px; border-bottom: 1px solid #eee; color: #999; line-height: 24px; letter-spacing: 0; }
.dh b { padding-left: 6px; border-right: 1px solid #eee; }
.dh b:last-child { border: 0; }
.dr { display: grid; grid-template-columns: 54px 339px 26px; height: 34px; align-items: center; padding-left: 4px; }
.dr span { padding-bottom: 2px; }
.dr svg { margin-bottom: 1px; }
```
